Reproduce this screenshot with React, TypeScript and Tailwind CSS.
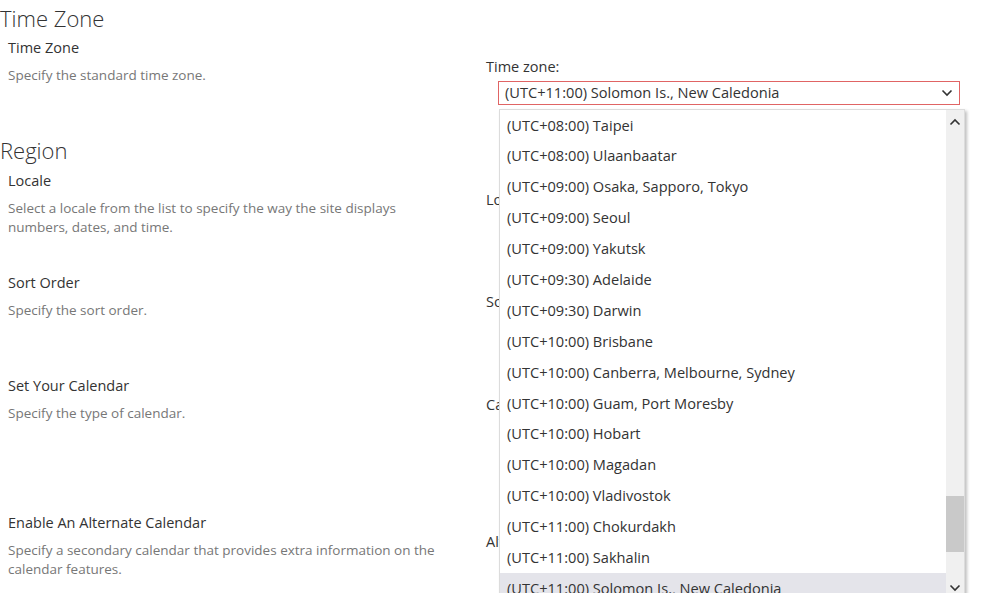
import React from 'react';

const zones = [
    '(UTC+08:00) Taipei',
    '(UTC+08:00) Ulaanbaatar',
    '(UTC+09:00) Osaka, Sapporo, Tokyo',
    '(UTC+09:00) Seoul',
    '(UTC+09:00) Yakutsk',
    '(UTC+09:30) Adelaide',
    '(UTC+09:30) Darwin',
    '(UTC+10:00) Brisbane',
    '(UTC+10:00) Canberra, Melbourne, Sydney',
    '(UTC+10:00) Guam, Port Moresby',
    '(UTC+10:00) Hobart',
    '(UTC+10:00) Magadan',
    '(UTC+10:00) Vladivostok',
    '(UTC+11:00) Chokurdakh',
    '(UTC+11:00) Sakhalin',
    '(UTC+11:00) Solomon Is., New Caledonia',
];

const selected = '(UTC+11:00) Solomon Is., New Caledonia';

const Chevron: React.FC<{ up?: boolean }> = ({ up }) => (
    <svg width="12" height="8" viewBox="0 0 12 8" fill="none">
        <path
            d={up ? 'M1.5 6.5 L6 2 L10.5 6.5' : 'M1.5 1.5 L6 6 L10.5 1.5'}
            stroke="#333"
            strokeWidth="1.6"
        />
    </svg>
);

const SectionHeading: React.FC<{ children: React.ReactNode }> = ({ children }) => (
    <h2 className="text-[22px] font-light leading-[36px] text-[#333] h-9">{children}</h2>
);

type RowProps = {
    title: string;
    desc: string;
    label: string;
    className: string;
    children?: React.ReactNode;
};

const Row: React.FC<RowProps> = ({ title, desc, label, className, children }) => (
    <div className={`grid grid-cols-[486px_1fr] ${className}`}>
        <div className="pl-2">
            <p className="text-[14.5px] leading-5 text-[#333]">{title}</p>
            <p className="mt-2 w-[440px] text-[13.5px] leading-[19px] text-[#777]">{desc}</p>
        </div>
        <div className="pt-[19px]">
            <p className="text-[14.5px] leading-5 text-[#333]">{label}</p>
            {children}
        </div>
    </div>
);

const TimeZoneSelect: React.FC = () => (
    <div className="relative mt-1 ml-3 w-[462px]">
        <div className="flex h-6 items-center justify-between border border-[#e06464] pl-[6px] pr-[6px]">
            <span className="text-[14.6px] text-[#333]">{selected}</span>
            <Chevron />
        </div>

        {/* dropdown list */}
        <div className="absolute left-px top-[28px] flex h-[492px] w-[466px] overflow-hidden border border-[#dcdcdc] bg-white shadow-[2px_2px_3px_rgba(0,0,0,0.25)]">
            <div className="flex-1 overflow-hidden">
                {zones.map((z) => (
                    <div
                        key={z}
                        className={`flex h-[30.9px] items-center pl-[7px] text-[14.6px] whitespace-nowrap text-[#333] ${z === selected ? 'bg-[#e4e4ea]' : ''}`}
                    >
                        {z}
                    </div>
                ))}
            </div>
            <div className="flex w-[18px] flex-col bg-[#f0f0f0]">
                <div className="flex h-6 items-center justify-center">
                    <Chevron up />
                </div>
                <div className="flex-1" />
                <div className="h-[56px] bg-[#c9c9c9]" />
                <div className="h-[32px]" />
                <div className="flex h-4 items-start justify-center">
                    <Chevron />
                </div>
            </div>
        </div>
    </div>
);

const App: React.FC = () => {
    return (
        <div
            className="relative h-[593px] w-[998px] overflow-hidden bg-white"
            style={{ fontFamily: '"Open Sans", "Noto Sans", sans-serif' }}
        >
            <SectionHeading>Time Zone</SectionHeading>
            <Row
                title="Time Zone"
                desc="Specify the standard time zone."
                label="Time zone:"
                className="h-[96px] pt-[2px]"
            >
                <TimeZoneSelect />
            </Row>

            <SectionHeading>Region</SectionHeading>
            <Row
                title="Locale"
                desc="Select a locale from the list to specify the way the site displays numbers, dates, and time."
                label="Locale:"
                className="h-[105px] pt-[3px]"
            />
            <Row
                title="Sort Order"
                desc="Specify the sort order."
                label="Sort order:"
                className="h-[103px]"
            />
            <Row
                title="Set Your Calendar"
                desc="Specify the type of calendar."
                label="Calendar:"
                className="h-[137px]"
            />
            <Row
                title="Enable An Alternate Calendar"
                desc="Specify a secondary calendar that provides extra information on the calendar features."
                label="Alternate Calendar:"
                className="h-[100px]"
            />
        </div>
    );
};

export default App;
